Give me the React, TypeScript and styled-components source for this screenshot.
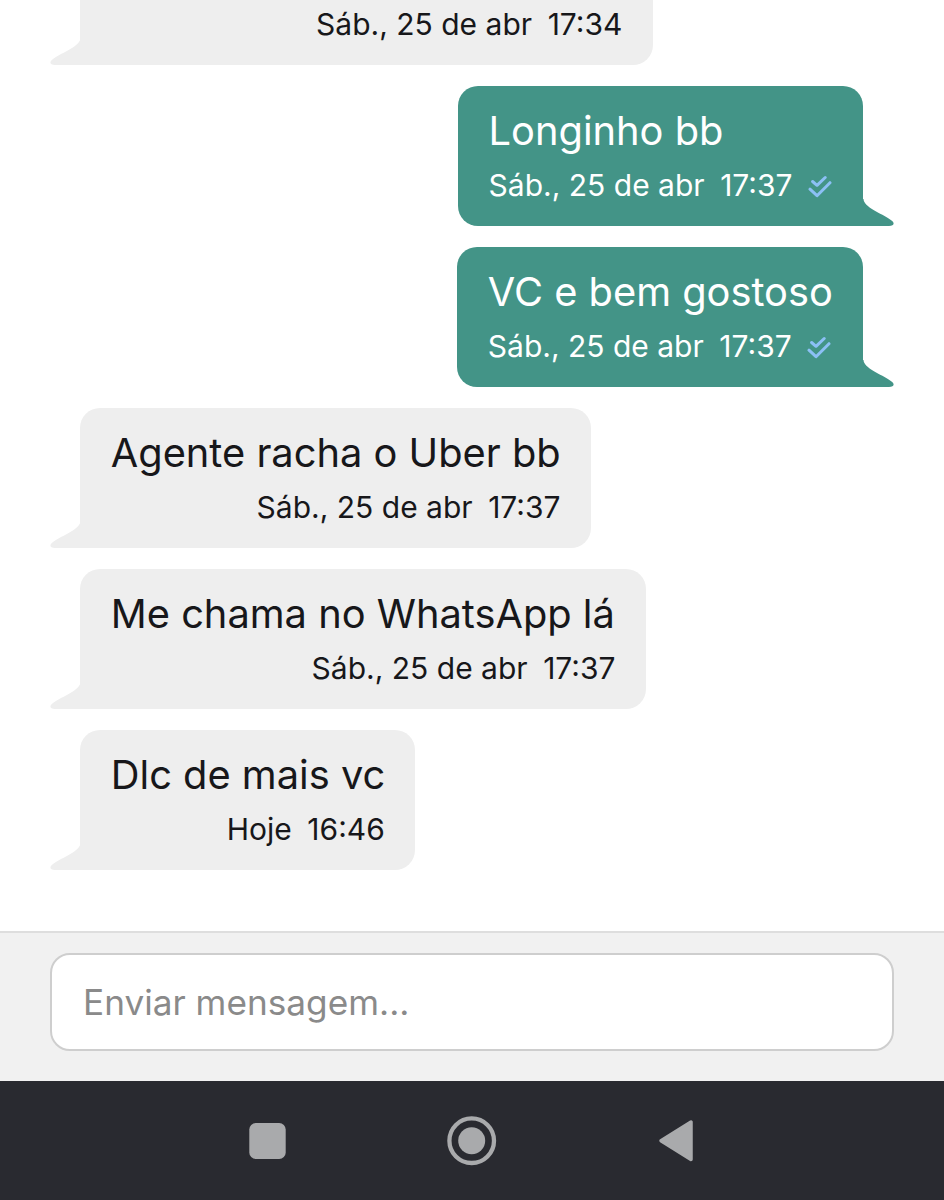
import React from "react";
import styled, { createGlobalStyle } from "styled-components";

const Global = createGlobalStyle`
  *{box-sizing:border-box}
  body{margin:0;background:#fff;font-family:Inter,"Liberation Sans",sans-serif}
`;
const Screen = styled.div`
  width:944px;height:1200px;display:flex;flex-direction:column;overflow:hidden;
`;
const Thread = styled.main`
  height:931px;display:flex;flex-direction:column;justify-content:flex-end;
  gap:20.6px;padding:0 80.6px 60.7px 80.4px;overflow:hidden;
`;
const Bubble = styled.article<{ $mine?: boolean; $w: number }>`
  position:relative;flex:none;width:${p => p.$w}px;height:140.4px;padding:21.400px 30.400px 0;
  display:flex;flex-direction:column;
  align-items:${p => (p.$mine ? "flex-start" : "flex-end")};
  align-self:${p => (p.$mine ? "flex-end" : "flex-start")};
  background:${p => (p.$mine ? "#439487" : "#eeeeee")};
  color:${p => (p.$mine ? "#fff" : "#17171a")};
  border-radius:${p => (p.$mine ? "20px 20px 0 20px" : "20px 20px 20px 0")};
`;
const Tail = styled.svg<{ $mine?: boolean }>`
  position:absolute;bottom:0;width:32px;height:27px;
  ${p => (p.$mine ? "right:-30.4px;transform:scaleX(-1);" : "left:-30.4px;")}
`;
const Message = styled.p`
  margin:0;align-self:flex-start;font-size:39.8px;line-height:48px;white-space:nowrap;
`;
const Meta = styled.div`
  display:flex;align-items:center;gap:15.6px;margin-top:10px;
  font-size:30px;line-height:40px;white-space:nowrap;
`;
const Check = styled.svg`width:24px;height:24px;margin:1px -2px 0 0;`;
const Composer = styled.footer`
  height:150px;padding:20px 50px 0;background:#f1f1f1;border-top:2px solid #dedede;
`;
const Input = styled.input`
  display:block;width:844px;height:98px;padding:0 31px;border:2px solid #cecece;border-radius:20px;
  background:#fff;font:35.2px Inter,sans-serif;outline:none;
  &::placeholder{color:#8a8a8a;opacity:1}
`;
const NavBar = styled.nav`
  height:119px;background:#292a30;display:flex;justify-content:center;align-items:center;
`;
const NavIcons = styled.svg`width:500px;height:119px;`;

type Item = { text: string; date: string; time: string; w: number; mine?: boolean };
const items: Item[] = [
  { text: "", date: "Sáb., 25 de abr", time: "17:34", w: 572.4 },
  { text: "Longinho bb", date: "Sáb., 25 de abr", time: "17:37", w: 405.2, mine: true },
  { text: "VC e bem gostoso", date: "Sáb., 25 de abr", time: "17:37", w: 406, mine: true },
  { text: "Agente racha o Uber bb", date: "Sáb., 25 de abr", time: "17:37", w: 510.5 },
  { text: "Me chama no WhatsApp lá", date: "Sáb., 25 de abr", time: "17:37", w: 565.5 },
  { text: "Dlc de mais vc", date: "Hoje", time: "16:46", w: 334.8 },
];

export default function App() {
  return (
    <Screen>
      <Global />
      <Thread>
        {items.map((m, i) => (
          <Bubble key={i} $mine={m.mine} $w={m.w}>
            <Message>{m.text || "\u00a0"}</Message>
            <Meta>
              <span>{m.date}</span>
              <span>{m.time}</span>
              {m.mine && (
                <Check viewBox="0 0 24 24" fill="none" stroke="#8cc0f5" strokeWidth="3" strokeLinecap="round" strokeLinejoin="round">
                  <path d="M4.600 7.500L9 11.300L17.200 3.500M2 15.200L9 21.700L22 8.700" />
                </Check>
              )}
            </Meta>
            <Tail $mine={m.mine} viewBox="0 0 32 27">
              <path d="M32 0V27H5C0.500 27 -1 24.500 1.800 22C10 15 28 10 30.400 1V0Z" fill={m.mine ? "#439487" : "#eeeeee"} />
            </Tail>
          </Bubble>
        ))}
      </Thread>
      <Composer>
        <Input placeholder="Enviar mensagem..." />
      </Composer>
      <NavBar>
        <NavIcons viewBox="222 1081 500 119">
          <rect x="249.300" y="1123" width="36.400" height="36" rx="6.500" fill="#a9aaac" />
          <circle cx="471.700" cy="1140.700" r="22.300" fill="none" stroke="#a9aaac" strokeWidth="4.300" />
          <circle cx="471.700" cy="1140.700" r="13.500" fill="#a9aaac" />
          <path d="M661 1140.700L691 1122V1159.400Z" fill="#a9aaac" stroke="#a9aaac" strokeWidth="3.500" strokeLinejoin="round" />
        </NavIcons>
      </NavBar>
    </Screen>
  );
}
